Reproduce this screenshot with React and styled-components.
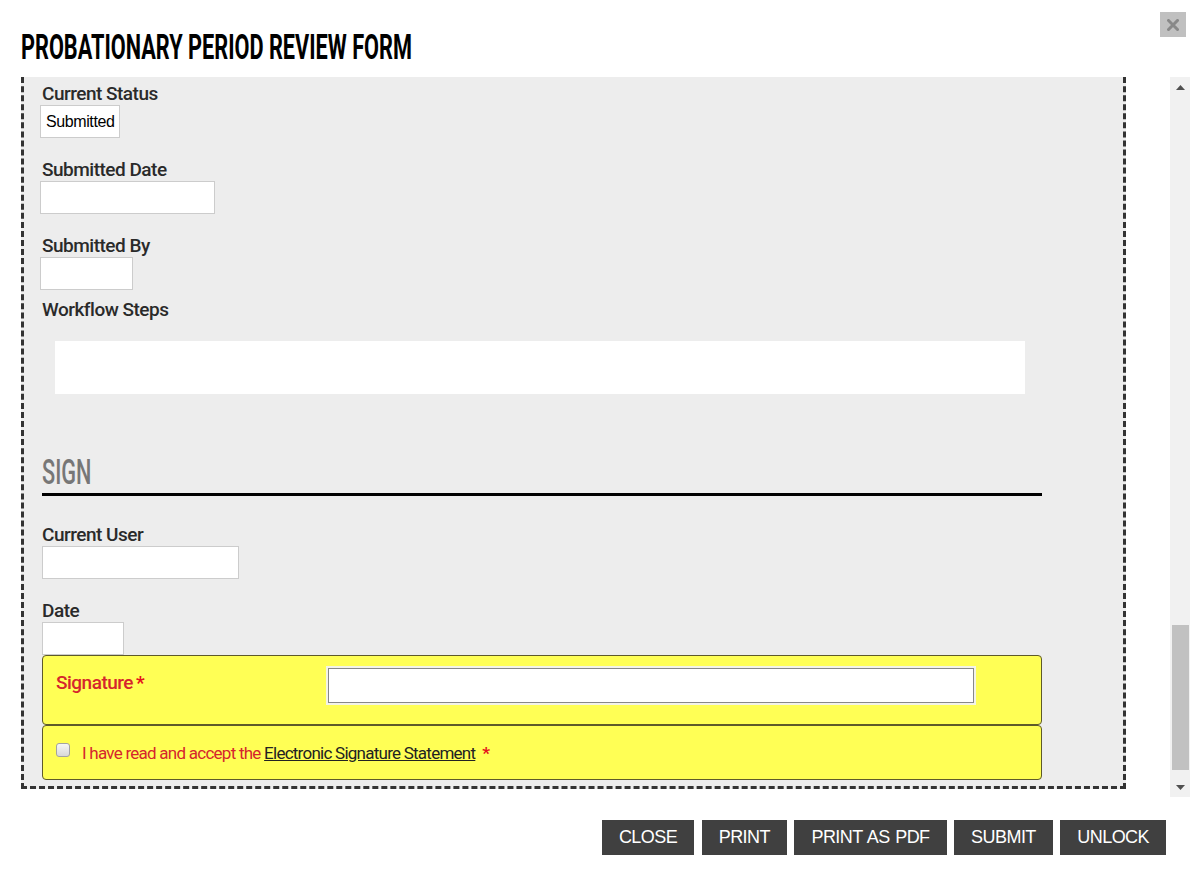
import React, { useLayoutEffect, useRef } from "react";
import styled, { createGlobalStyle } from "styled-components";

const GlobalStyle = createGlobalStyle`
  html, body { margin: 0; padding: 0; background: #fff; }
  body { font-family: Roboto, "Liberation Sans", Arial, sans-serif; }
  * { box-sizing: border-box; }
`;

const Dialog = styled.div`
  width: 1195px;
  height: 875px;
  padding: 0 5px 0 21px;
  display: flex;
  flex-direction: column;
  background: #fff;
`;

const Header = styled.div`
  display: flex;
  align-items: flex-end;
  justify-content: space-between;
  height: 77px;
`;

const Title = styled.h1`
  margin: 0;
  padding-bottom: 12px;
  font: 700 35px/35px Roboto, "Liberation Sans", sans-serif;
  color: #000;
  white-space: nowrap;
`;

const Condensed = styled.span`
  display: inline-block;
  transform: scaleX(${(p) => p.$scale || 0.62});
  transform-origin: left center;
`;

const CloseButton = styled.button`
  align-self: flex-start;
  margin: 12px 4px 0 0;
  width: 26px;
  height: 25px;
  padding: 0;
  border: none;
  background: #c0c0c0;
  display: flex;
  align-items: center;
  justify-content: center;
  cursor: pointer;
`;

const ScrollArea = styled.div`
  display: flex;
  height: 720px;
`;

const Viewport = styled.div`
  flex: 1;
  overflow-y: auto;
  scrollbar-width: none;
  &::-webkit-scrollbar { display: none; }
`;

const Form = styled.form`
  width: 1105px;
  margin: 0 0 8px 0;
  border: 3px dashed #333;
  background: #ededed;
  padding: 20px 0 6px 16px;
`;

const Field = styled.div`
  margin-bottom: ${(p) => (p.$gap ?? 20)}px;
  margin-top: ${(p) => (p.$top ?? 0)}px;
`;

const Label = styled.label`
  display: block;
  padding-left: ${(p) => (p.$indent ? 2 : 0)}px;
  font: 500 19px/23px Roboto, "Liberation Sans", sans-serif;
  letter-spacing: -0.5px;
  color: #2a2a2a;
`;

const TextBox = styled.input`
  display: block;
  width: ${(p) => p.$w}px;
  height: 33px;
  margin: 0;
  padding: 0 5px;
  border: 1px solid #ccc;
  background: #fff;
  font: 16px "Liberation Sans", Arial, sans-serif;
  outline: none;
`;

const StatusBox = styled.div`
  display: inline-flex;
  align-items: center;
  height: 33px;
  padding: 0 5px;
  border: 1px solid #ccc;
  background: #fff;
  font: 16px "Liberation Sans", Arial, sans-serif;
  letter-spacing: -0.4px;
  color: #000;
`;

const WorkflowBox = styled.div`
  margin: 20px 0 0 15px;
  width: 970px;
  height: 53px;
  background: #fff;
`;

const SignSection = styled.section`
  padding-left: 2px;
`;

const SectionHeading = styled.h2`
  width: 1000px;
  margin: 61px 0 0 0;
  padding-bottom: 3px;
  border-bottom: 3px solid #000;
  font: 500 35px/35px Roboto, "Liberation Sans", sans-serif;
  color: #777;
  white-space: nowrap;
`;

const YellowBox = styled.div`
  width: 1000px;
  height: ${(p) => p.$h}px;
  border: 1px solid #5e5a2a;
  border-radius: 4px;
  background: #ffff55;
  display: flex;
  align-items: ${(p) => (p.$center ? "center" : "flex-start")};
  padding: ${(p) => (p.$center ? "0 0 0 13px" : "12px 0 0 13px")};
`;

const SigLabel = styled.label`
  width: 272px;
  margin-top: 3px;
  font: 500 19px/23px Roboto, "Liberation Sans", sans-serif;
  letter-spacing: -0.5px;
  color: #d5252d;
`;

const Star = styled.span`
  color: #e4141c;
  font-weight: 700;
  margin-left: ${(p) => p.$gap || 3}px;
`;

const SigInput = styled.input`
  width: 646px;
  height: 35px;
  margin: 0;
  border: 1px solid #888;
  box-shadow: 0 0 0 2px #f3f3e8;
  background: #fff;
  outline: none;
`;

const Check = styled.input`
  appearance: none;
  -webkit-appearance: none;
  width: 14px;
  height: 14px;
  margin: 0 12px 5px 0;
  border: 1px solid #a3a3a3;
  border-radius: 3px;
  background: linear-gradient(#f6f6f6, #d9d9d9);
  flex: none;
`;

const AgreeText = styled.span`
  font: 400 17px/20px Roboto, "Liberation Sans", sans-serif;
  letter-spacing: -0.75px;
  color: #d5252d;
`;

const AgreeLink = styled.a`
  color: #222;
  text-decoration: underline;
  cursor: pointer;
`;

const ScrollBar = styled.div`
  width: 20px;
  display: flex;
  flex-direction: column;
  background: #f1f1f1;
`;

const ArrowButton = styled.div`
  height: 20px;
  display: flex;
  align-items: center;
  justify-content: center;
`;

const Track = styled.div`
  flex: 1;
  display: flex;
  flex-direction: column;
  justify-content: flex-end;
  padding: 0 1px 7px 2px;
`;

const Thumb = styled.div`
  height: 145px;
  background: #c1c1c1;
`;

const Footer = styled.div`
  display: flex;
  justify-content: flex-end;
  gap: 7.5px;
  padding: 23px 24px 0 0;
`;

const ActionButton = styled.button`
  height: 35px;
  padding: 0 17px;
  border: none;
  background: #404040;
  color: #fff;
  font: 18px "Liberation Sans", Arial, sans-serif;
  letter-spacing: -0.55px;
  word-spacing: 1px;
  text-transform: uppercase;
  cursor: pointer;
`;

const Triangle = ({ down }) => (
  <svg width="9" height="5" viewBox="0 0 9 5">
    <polygon points={down ? "0,0 9,0 4.5,5" : "0,5 9,5 4.5,0"} fill="#505050" />
  </svg>
);

export default function App() {
  const viewportRef = useRef(null);
  useLayoutEffect(() => {
    if (viewportRef.current) viewportRef.current.scrollTop = 18;
  }, []);

  return (
    <>
      <GlobalStyle />
      <Dialog>
        <Header>
          <Title>
            <Condensed>PROBATIONARY PERIOD REVIEW FORM</Condensed>
          </Title>
          <CloseButton aria-label="Close">
            <svg width="12" height="12" viewBox="0 0 12 12">
              <path d="M1.5 1.5 L10.5 10.5 M10.5 1.5 L1.5 10.5" stroke="#888" strokeWidth="3" strokeLinecap="square" />
            </svg>
          </CloseButton>
        </Header>

        <ScrollArea>
          <Viewport ref={viewportRef}>
            <Form onSubmit={(e) => e.preventDefault()}>
              <Field>
                <Label $indent>Current Status</Label>
                <StatusBox>Submitted</StatusBox>
              </Field>
              <Field>
                <Label $indent>Submitted Date</Label>
                <TextBox $w={175} readOnly />
              </Field>
              <Field $gap={8}>
                <Label $indent>Submitted By</Label>
                <TextBox $w={93} readOnly />
              </Field>
              <Label $indent>Workflow Steps</Label>
              <WorkflowBox />

              <SignSection>
                <SectionHeading>
                  <Condensed>SIGN</Condensed>
                </SectionHeading>
                <Field $top={27}>
                  <Label>Current User</Label>
                  <TextBox $w={197} readOnly />
                </Field>
                <Field $gap={0}>
                  <Label>Date</Label>
                  <TextBox $w={82} readOnly />
                </Field>
                <YellowBox $h={70}>
                  <SigLabel>
                    Signature<Star>*</Star>
                  </SigLabel>
                  <SigInput type="text" />
                </YellowBox>
                <YellowBox $h={55} $center>
                  <Check type="checkbox" />
                  <AgreeText>
                    I have read and accept the <AgreeLink>Electronic Signature Statement</AgreeLink>
                    <Star $gap={7}>*</Star>
                  </AgreeText>
                </YellowBox>
              </SignSection>
            </Form>
          </Viewport>
          <ScrollBar>
            <ArrowButton><Triangle /></ArrowButton>
            <Track><Thumb /></Track>
            <ArrowButton><Triangle down /></ArrowButton>
          </ScrollBar>
        </ScrollArea>

        <Footer>
          <ActionButton>Close</ActionButton>
          <ActionButton>Print</ActionButton>
          <ActionButton>Print as PDF</ActionButton>
          <ActionButton>Submit</ActionButton>
          <ActionButton>Unlock</ActionButton>
        </Footer>
      </Dialog>
    </>
  );
}
